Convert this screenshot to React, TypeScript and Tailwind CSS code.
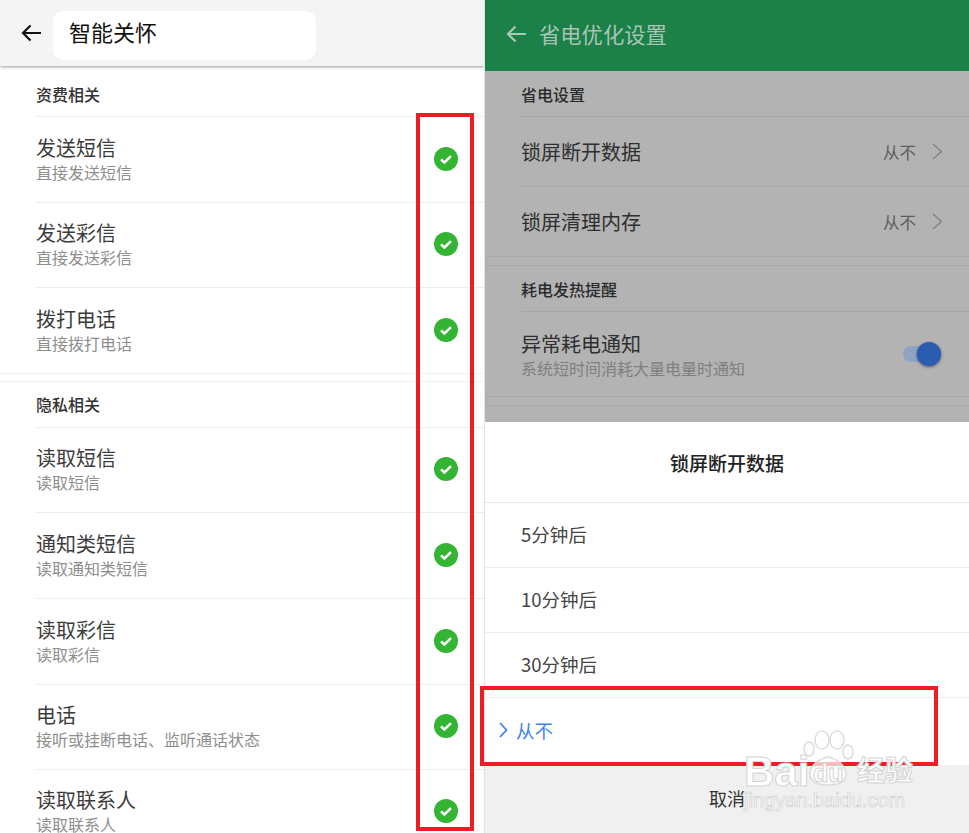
const CJK = "font-['Noto_Sans_CJK_SC','Noto_Sans',sans-serif]";

function Back({ color }: { color: string }) {
  return (
    <svg width="20" height="18" viewBox="0 0 20 18" fill="none" stroke={color} strokeWidth="2.2">
      <path d="M20 9H2M9.5 1.5 2 9l7.5 7.5" />
    </svg>
  );
}

function Check() {
  return (
    <svg width="24" height="24" viewBox="0 0 24 24" className="shrink-0 -mt-[2px]">
      <circle cx="12" cy="12" r="12" fill="#33b533" />
      <path d="M7 12.3l3.4 3.2L17 9.2" fill="none" stroke="#fff" strokeWidth="2.5" />
    </svg>
  );
}

function Chevron() {
  return (
    <svg width="11" height="17" viewBox="0 0 11 17" fill="none" stroke="#7d7d7d" strokeWidth="1.2">
      <path d="M1 1l8.5 7.5L1 16" />
    </svg>
  );
}

function PermRow({ title, sub, h, last }: { title: string; sub: string; h: string; last?: boolean }) {
  return (
    <div className={`flex items-center pr-[26px] ${h} ${last ? "border-b border-[#f0f0f0] pl-[36px]" : "ml-[36px] border-b border-[#eeeeee]"}`}>
      <div className="flex-1 flex flex-col">
        <div className="text-[20px] leading-[24px] text-[#3c3c3c]">{title}</div>
        <div className="text-[16px] leading-[24px] text-[#8e8e8e]">{sub}</div>
      </div>
      <Check />
    </div>
  );
}

function SectionTitle({ text, h, pb, dark }: { text: string; h: string; pb: string; dark?: boolean }) {
  return (
    <div className={`ml-[36px] flex items-end border-b ${h} ${pb} ${dark ? "border-[#a6a6a6]" : "border-[#eeeeee]"}`}>
      <span className={`text-[16px] leading-[20px] font-medium ${dark ? "text-[#2b2b2b]" : "text-[#333333]"}`}>{text}</span>
    </div>
  );
}

function SettingRow({ title, h, last }: { title: string; h: string; last?: boolean }) {
  return (
    <div className={`flex items-center pr-[26px] border-b border-[#a9a9a9] ${h} ${last ? "pl-[36px]" : "ml-[36px]"}`}>
      <span className="flex-1 text-[20px] leading-[26px] text-[#2f2f2f]">{title}</span>
      <span className="text-[16.5px] leading-[22px] text-[#5c5c5c] mr-[16px]">从不</span>
      <Chevron />
    </div>
  );
}

function SheetRow({ text }: { text: string }) {
  return (
    <div className="h-[65px] pl-[36px] pb-[3px] flex items-center border-b border-[#eeeeee]">
      <span className="text-[18.5px] leading-[24px] text-[#444444]">{text}</span>
    </div>
  );
}

function Watermark() {
  return (
    <div className="absolute left-[744px] top-[728px] w-[176px] h-[84px] pointer-events-none text-white [-webkit-text-stroke:1px_#d4d4d4]">
      <svg width="52" height="60" viewBox="0 0 52 60" className="absolute left-[58px] top-0" fill="none" stroke="#dcdcdc" strokeWidth="1.5">
        <ellipse cx="7" cy="21" rx="5" ry="7" fill="#fff" />
        <ellipse cx="20" cy="12" rx="7" ry="9" fill="#fff" />
        <ellipse cx="35" cy="12" rx="7" ry="9" fill="#fff" />
        <ellipse cx="46" cy="24" rx="5" ry="7" fill="#fff" />
        <path d="M8 46c0-8 8-15 18-17 10 2 18 9 18 17 0 8-8 11-18 11S8 54 8 46Z" fill="#fff" fillOpacity="0.7" />
      </svg>
      <span className="absolute left-0 top-[21px] text-[42px] leading-[46px] font-bold font-['Liberation_Sans',sans-serif]">Bai</span>
      <span className="absolute left-[69px] top-[29px] text-[25px] leading-[32px] font-bold font-['Liberation_Sans',sans-serif]">du</span>
      <span className="absolute left-[113px] top-[24px] text-[28px] leading-[34px] font-bold whitespace-nowrap">经验</span>
      <span className="absolute left-0 top-[61px] text-[20px] leading-[22px] font-['Liberation_Sans',sans-serif] whitespace-nowrap [-webkit-text-stroke:0.7px_#cfcfcf]">jingyan.baidu.com</span>
    </div>
  );
}

export default function App() {
  return (
    <div className={`relative flex w-[969px] h-[833px] overflow-hidden bg-white ${CJK}`}>
      {/* Left phone screen */}
      <div className="w-[485px] h-full overflow-hidden shrink-0 border-r border-[#e4e4e4]">
        <div className="h-[66px] bg-[#f4f4f4] flex items-start pt-[11px] shadow-[0_1px_3px_rgba(0,0,0,0.4)] relative">
          <div className="ml-[21px] mr-[12px] mt-[13px] flex items-center">
            <Back color="#111111" />
          </div>
          <div className="w-[263px] h-[49px] bg-white rounded-[10px] pl-[16px] flex items-start">
            <span className="text-[22px] leading-[40px] text-[#111111]">智能关怀</span>
          </div>
        </div>
        <SectionTitle text="资费相关" h="h-[51px]" pb="pb-[12px]" />
        <PermRow title="发送短信" sub="直接发送短信" h="h-[86px]" />
        <PermRow title="发送彩信" sub="直接发送彩信" h="h-[85px]" />
        <PermRow title="拨打电话" sub="直接拨打电话" h="h-[86px]" last />
        <div className="h-[8px] border-b border-[#f0f0f0]" />
        <SectionTitle text="隐私相关" h="h-[46px]" pb="pb-[13px]" />
        <PermRow title="读取短信" sub="读取短信" h="h-[85px]" />
        <PermRow title="通知类短信" sub="读取通知类短信" h="h-[86px]" />
        <PermRow title="读取彩信" sub="读取彩信" h="h-[86px]" />
        <PermRow title="电话" sub="接听或挂断电话、监听通话状态" h="h-[85px]" />
        <PermRow title="读取联系人" sub="读取联系人" h="h-[85px]" />
      </div>

      {/* Right phone screen */}
      <div className="flex-1 h-full flex flex-col bg-[#b3b3b3] overflow-hidden">
        <div className="h-[71px] shrink-0 bg-[#1c8049] flex items-center pl-[21px] pb-[4px]">
          <Back color="#a9c9b6" />
          <span className="ml-[13px] text-[21.3px] leading-[28px] text-[#a9c4b4]">省电优化设置</span>
        </div>
        <SectionTitle text="省电设置" h="h-[46px]" pb="pb-[12px]" dark />
        <SettingRow title="锁屏断开数据" h="h-[70px]" />
        <SettingRow title="锁屏清理内存" h="h-[70px]" last />
        <div className="h-[9px] border-b border-[#a9a9a9]" />
        <SectionTitle text="耗电发热提醒" h="h-[46px]" pb="pb-[12px]" dark />
        <div className="h-[85px] pl-[36px] pr-[28px] flex items-center border-b border-[#a9a9a9]">
          <div className="flex-1 flex flex-col mt-[3px]">
            <div className="text-[20px] leading-[24px] text-[#2f2f2f]">异常耗电通知</div>
            <div className="text-[16px] leading-[24px] text-[#7f7f7f]">系统短时间消耗大量电量时通知</div>
          </div>
          <div className="relative w-[38px] h-[16px] rounded-full bg-[#8fa3c4]">
            <div className="absolute right-0 -top-[4px] w-[24px] h-[24px] rounded-full bg-[#2a5db0] shadow-[0_1px_3px_rgba(0,0,0,0.5)]" />
          </div>
        </div>
        <div className="h-[9px] border-b border-[#a9a9a9]" />
        <div className="flex-1 min-h-0" />
        <div className="bg-white shrink-0">
          <div className="h-[81px] pt-[2px] flex items-center justify-center border-b border-[#e8e8e8]">
            <span className="text-[19px] leading-[24px] font-medium text-[#222222]">锁屏断开数据</span>
          </div>
          <SheetRow text="5分钟后" />
          <SheetRow text="10分钟后" />
          <SheetRow text="30分钟后" />
          <div className="h-[67px] pl-[14px] pb-[4px] flex items-center">
            <svg width="9" height="16" viewBox="0 0 9 16" fill="none" stroke="#3b82f6" strokeWidth="1.8" className="mr-[8px]">
              <path d="M1 1l6.5 7L1 15" />
            </svg>
            <span className="text-[18.5px] leading-[24px] text-[#3d84f0]">从不</span>
          </div>
          <div className="h-[68px] pb-[2px] bg-[#f0f0f0] flex items-center justify-center">
            <span className="text-[18px] leading-[24px] text-[#333333]">取消</span>
          </div>
        </div>
      </div>

      {/* Red annotations */}
      <div className="absolute left-[416px] top-[113px] w-[58px] h-[718px] border-[4px] border-[#ee1c25]" />
      <div className="absolute left-[480px] top-[686px] w-[458px] h-[80px] border-[4px] border-[#ee1c25]" />
      <Watermark />
    </div>
  );
}
